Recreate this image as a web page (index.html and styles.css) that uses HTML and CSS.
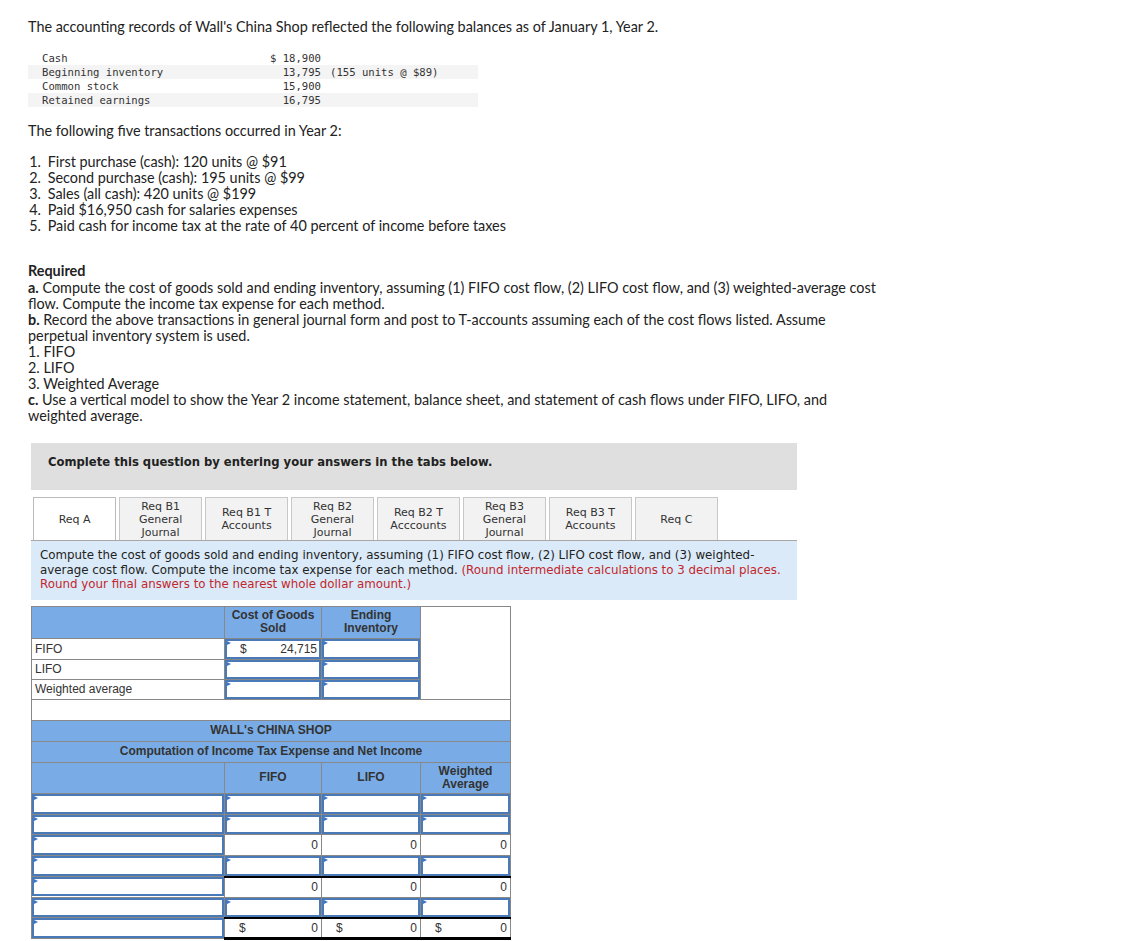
FILE: index.html
```html
<!DOCTYPE html>
<html>
<head>
<meta charset="utf-8">
<link rel="stylesheet" href="styles.css">
</head>
<body>
<div class="page">
  <p class="intro">The accounting records of Wall's China Shop reflected the following balances as of January 1, Year 2.</p>
  <table class="bal">
    <tr><td class="b-name">Cash</td><td class="b-amt">$ 18,900</td><td class="b-note"></td></tr>
    <tr class="alt"><td class="b-name">Beginning inventory</td><td class="b-amt">13,795</td><td class="b-note">(155 units @ $89)</td></tr>
    <tr><td class="b-name">Common stock</td><td class="b-amt">15,900</td><td class="b-note"></td></tr>
    <tr class="alt"><td class="b-name">Retained earnings</td><td class="b-amt">16,795</td><td class="b-note"></td></tr>
  </table>
  <p class="intro2">The following five transactions occurred in Year 2:</p>
  <div class="list">
    <div class="li"><span class="num">1.</span> First purchase (cash): 120 units @ $91</div>
    <div class="li"><span class="num">2.</span> Second purchase (cash): 195 units @ $99</div>
    <div class="li"><span class="num">3.</span> Sales (all cash): 420 units @ $199</div>
    <div class="li"><span class="num">4.</span> Paid $16,950 cash for salaries expenses</div>
    <div class="li"><span class="num">5.</span> Paid cash for income tax at the rate of 40 percent of income before taxes</div>
  </div>
  <div class="req">
    <div class="req-title">Required</div>
    <div><b>a.</b> Compute the cost of goods sold and ending inventory, assuming (1) FIFO cost flow, (2) LIFO cost flow, and (3) weighted-average cost flow. Compute the income tax expense for each method.</div>
    <div><b>b.</b> Record the above transactions in general journal form and post to T-accounts assuming each of the cost flows listed. Assume perpetual inventory system is used.</div>
    <div>1. FIFO</div>
    <div>2. LIFO</div>
    <div>3. Weighted Average</div>
    <div><b>c.</b> Use a vertical model to show the Year 2 income statement, balance sheet, and statement of cash flows under FIFO, LIFO, and weighted average.</div>
  </div>

  <div class="qbox">Complete this question by entering your answers in the tabs below.</div>

  <div class="tabs">
    <div class="tab active">Req A</div>
    <div class="tab">Req B1<br>General<br>Journal</div>
    <div class="tab">Req B1 T<br>Accounts</div>
    <div class="tab">Req B2<br>General<br>Journal</div>
    <div class="tab">Req B2 T<br>Acccounts</div>
    <div class="tab">Req B3<br>General<br>Journal</div>
    <div class="tab">Req B3 T<br>Accounts</div>
    <div class="tab">Req C</div>
  </div>
  <div class="instr">Compute the cost of goods sold and ending inventory, assuming (1) FIFO cost flow, (2) LIFO cost flow, and (3) weighted-average cost flow. Compute the income tax expense for each method. <span class="red">(Round intermediate calculations to 3 decimal places. Round your final answers to the nearest whole dollar amount.)</span></div>

  <table class="grid">
    <colgroup><col class="c0"><col class="c1"><col class="c2"><col class="c3"></colgroup>
    <tr class="h32"><th class="blue"></th><th class="blue">Cost of Goods<br>Sold</th><th class="blue">Ending<br>Inventory</th><td class="blank" rowspan="4"></td></tr>
    <tr class="h21"><td class="lbl">FIFO</td><td class="in"><div class="box"><span class="cur">$</span><span class="val">24,715</span></div></td><td class="in"><div class="box"></div></td></tr>
    <tr class="h20"><td class="lbl">LIFO</td><td class="in"><div class="box"></div></td><td class="in"><div class="box"></div></td></tr>
    <tr class="h20"><td class="lbl">Weighted average</td><td class="in"><div class="box"></div></td><td class="in"><div class="box"></div></td></tr>
    <tr class="h21"><td class="spacer" colspan="4"></td></tr>
    <tr class="h21"><th class="blue" colspan="4">WALL's CHINA SHOP</th></tr>
    <tr class="h21"><th class="blue" colspan="4">Computation of Income Tax Expense and Net Income</th></tr>
    <tr class="h31"><th class="blue"></th><th class="blue">FIFO</th><th class="blue">LIFO</th><th class="blue">Weighted<br>Average</th></tr>
    <tr class="h21"><td class="in"><div class="box"></div></td><td class="in"><div class="box"></div></td><td class="in"><div class="box"></div></td><td class="in"><div class="box"></div></td></tr>
    <tr class="h20"><td class="in"><div class="box"></div></td><td class="in"><div class="box"></div></td><td class="in"><div class="box"></div></td><td class="in"><div class="box"></div></td></tr>
    <tr class="h21 sub1"><td class="in"><div class="box"></div></td><td class="num">0</td><td class="num">0</td><td class="num">0</td></tr>
    <tr class="h21"><td class="in"><div class="box"></div></td><td class="in"><div class="box"></div></td><td class="in"><div class="box"></div></td><td class="in"><div class="box"></div></td></tr>
    <tr class="h20 sub2"><td class="in"><div class="box"></div></td><td class="num">0</td><td class="num">0</td><td class="num">0</td></tr>
    <tr class="h20"><td class="in"><div class="box"></div></td><td class="in"><div class="box"></div></td><td class="in"><div class="box"></div></td><td class="in"><div class="box"></div></td></tr>
    <tr class="h18 total"><td class="in"><div class="box"></div></td><td class="num"><span class="cur">$</span>0</td><td class="num"><span class="cur">$</span>0</td><td class="num"><span class="cur">$</span>0</td></tr>
  </table>
</div>
</body>
</html>
```

FILE: styles.css
```css
body {
  margin: 0;
  background: #fff;
  color: #222;
  font-family: Lato, "Open Sans", sans-serif;
  font-size: 14.4px;
}
.page {
  padding: 17px 0 20px 28px;
}
.intro {
  margin: 0;
  line-height: 20px;
}
.bal {
  margin-top: 14px;
  width: 450px;
  border-collapse: collapse;
  font-family: "DejaVu Sans Mono", monospace;
  font-size: 10.6px;
  color: #333;
}
.bal td {
  padding: 0;
  height: 14px;
  line-height: 14px;
  white-space: pre;
}
.bal tr.alt td { background: #f4f4f4; }
.b-name { width: 208px; padding-left: 14px !important; }
.b-amt { width: 71px; text-align: right; }
.b-note { padding-left: 9px !important; }
.intro2 {
  margin: 14px 0 0 0;
  line-height: 20px;
}
.list {
  margin-top: 13px;
  line-height: 16px;
}
.li .num {
  display: inline-block;
  width: 13px;
  text-align: right;
}
.req {
  margin-top: 29px;
  width: 850px;
  line-height: 16px;
}
.req-title { font-weight: bold; margin-bottom: 1px; }
.qbox {
  margin: 19px 0 0 3px;
  width: 766px;
  height: 47px;
  box-sizing: border-box;
  padding: 11px 0 0 17px;
  background: #dfdfdf;
  font-family: "DejaVu Sans", Verdana, sans-serif;
  font-weight: bold;
  font-size: 11.6px;
  line-height: 16px;
  color: #222;
}
.tabs {
  margin: 7px 0 0 3px;
  width: 766px;
  box-sizing: border-box;
  padding-left: 2px;
  display: flex;
  gap: 2.67px;
  border-bottom: 1px solid #a8a8a8;
}
.tab {
  width: 83.3px;
  height: 43px;
  box-sizing: border-box;
  border: 1px solid #c8c8c8;
  border-bottom: none;
  background: #f2f2f2;
  display: flex;
  align-items: center;
  justify-content: center;
  text-align: center;
  font-family: "DejaVu Sans", Verdana, sans-serif;
  font-size: 11px;
  line-height: 13px;
  color: #333;
}
.tab.active { background: #fff; border-color: #bbb; }
.instr {
  margin-left: 3px;
  width: 766px;
  box-sizing: border-box;
  padding: 7px 10px 8px 9px;
  background: #dbeaf8;
  font-family: "DejaVu Sans", Verdana, sans-serif;
  font-size: 11.85px;
  line-height: 14.5px;
  color: #222;
}
.red { color: #c1272d; }

.grid {
  margin: 6px 0 0 3px;
  border-collapse: collapse;
  table-layout: fixed;
  width: 479px;
  font-family: "Liberation Sans", Arial, sans-serif;
  font-size: 12px;
  color: #333;
}
.c0 { width: 193px; }
.c1 { width: 97px; }
.c2 { width: 99px; }
.c3 { width: 90px; }
.grid th, .grid td {
  border: 1px solid #888;
  padding: 0;
}
.grid th {
  font-weight: bold;
  line-height: 13px;
  text-align: center;
}
.blue { background: #79ace6; }
.blank { background: #fff; }
.spacer { background: #fff; }
.h32 > * { height: 31px; }
.h31 > * { height: 30px; }
.h21 > * { height: 20px; }
.h20 > * { height: 19px; }
.h18 > * { height: 18px; }
.lbl {
  padding-left: 3px !important;
  text-align: left;
}
.in { vertical-align: top; }
.box {
  position: relative;
  box-sizing: border-box;
  height: 100%;
  border: 2px solid #4a79b8;
  display: flex;
  align-items: center;
  justify-content: space-between;
  padding: 0 2px 0 13px;
}
.h21 .box { height: 20px; }
.h20 .box { height: 19px; }
.h18 .box { height: 20px; }
.box::before {
  content: "";
  position: absolute;
  left: 0;
  top: 0;
  border-left: 4px solid #3a75c9;
  border-top: 2.5px solid transparent;
  border-bottom: 2.5px solid transparent;
}
.num {
  text-align: right;
  padding-right: 3px !important;
  position: relative;
}
.num .cur {
  float: left;
  padding-left: 14px;
}
.sub1 .num { border-top: 1px solid #000; }
.sub2 .num { border-top: 2px solid #000; }
.total .num { border-top: 2px solid #000; border-bottom: 3px solid #000; }
```
